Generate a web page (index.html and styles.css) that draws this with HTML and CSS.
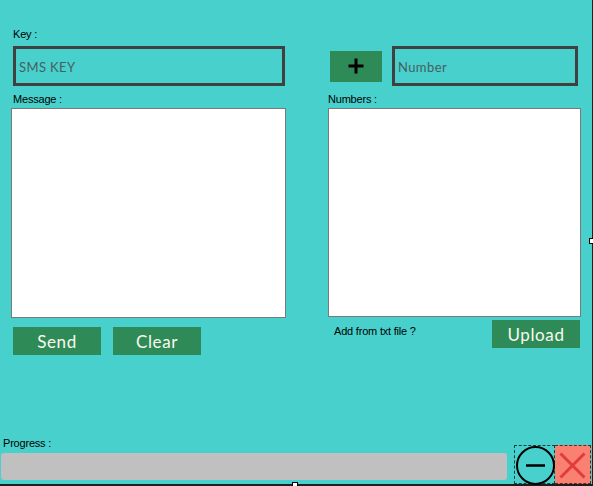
FILE: index.html
```html
<!DOCTYPE html>
<html>
<head>
<meta charset="utf-8">
<link rel="stylesheet" href="styles.css">
</head>
<body>
<div class="frame">
  <div class="top">
    <div class="col">
      <div class="label">Key :</div>
      <div class="field field-key"><span class="hint">SMS KEY</span></div>
      <div class="label label-gap">Message :</div>
      <div class="memo memo-left"></div>
      <div class="btnrow">
        <div class="btn">Send</div>
        <div class="btn">Clear</div>
      </div>
    </div>
    <div class="col">
      <div class="addrow">
        <div class="plus">
          <svg width="18" height="18" viewBox="0 0 18 18"><path d="M9 1.5V16.5M1.5 9H16.5" stroke="#000" stroke-width="3"/></svg>
        </div>
        <div class="field field-num"><span class="hint">Number</span></div>
      </div>
      <div class="label label-gap label-flush">Numbers :</div>
      <div class="memo memo-right"></div>
      <div class="uprow">
        <div class="label upl-label">Add from txt file ?</div>
        <div class="btn">Upload</div>
      </div>
    </div>
  </div>
  <div class="bottom">
    <div class="label prog-label">Progress :</div>
    <div class="bar"></div>
    <div class="minbox">
      <svg width="41" height="39" viewBox="0 0 41 39"><circle cx="20.5" cy="19.5" r="18.5" fill="none" stroke="#000" stroke-width="2"/><path d="M11 19.5H30" stroke="#000" stroke-width="2.5"/></svg>
    </div>
    <div class="closebox">
      <svg width="35" height="38" viewBox="0 0 35 38"><path d="M5.5 7.5L29.5 31.5M29.5 7.5L5.5 31.5" stroke="#E23B3B" stroke-width="3"/></svg>
    </div>
  </div>
  <div class="handle handle-bottom"></div>
  <div class="handle handle-right"></div>
</div>
</body>
</html>
```
FILE: styles.css
```css
html, body {
  margin: 0;
  padding: 0;
  background: #48D1CC;
}
body {
  width: 593px;
  height: 486px;
  overflow: hidden;
}
.frame {
  position: relative;
  width: 592px;
  height: 484px;
  border-right: 1px solid #1f1f1f;
  border-bottom: 2px solid #1f1f1f;
  display: flex;
  flex-direction: column;
  background: #48D1CC;
}
.top {
  display: grid;
  grid-template-columns: 275px 253px;
  column-gap: 42px;
  padding: 28px 0 0 11px;
}
.col {
  display: flex;
  flex-direction: column;
  align-items: flex-start;
}
.label {
  font-family: "Liberation Sans", Arial, sans-serif;
  font-size: 11px;
  line-height: 13px;
  color: #000;
  margin-left: 2px;
  white-space: nowrap;
  letter-spacing: -0.2px;
}
.label-gap {
  margin-top: 7px;
}
.label-flush {
  margin-left: 0;
}
.field {
  box-sizing: border-box;
  height: 40px;
  border: 3px solid #404040;
  display: flex;
  align-items: center;
  padding-left: 3px;
}
.field-key {
  margin: 5px 0 0 2px;
  width: 272px;
}
.field-num {
  width: 186px;
}
.hint {
  font-family: "Lato", "DejaVu Sans", sans-serif;
  font-size: 13px;
  font-weight: 400;
  color: #466060;
  letter-spacing: 0.4px;
  padding-top: 2px;
}
.memo {
  box-sizing: border-box;
  margin-top: 2px;
  background: #fff;
  border: 1px solid #7a7a7a;
}
.memo-left {
  width: 275px;
  height: 210px;
}
.memo-right {
  width: 253px;
  height: 209px;
}
.btnrow {
  display: flex;
  gap: 12px;
  margin: 9px 0 0 2px;
}
.btn {
  width: 88px;
  height: 28px;
  background: #2E8B57;
  color: #fafaf0;
  font-family: "Lato", "DejaVu Sans", sans-serif;
  font-size: 17px;
  font-weight: 400;
  letter-spacing: 0.6px;
  display: flex;
  align-items: center;
  justify-content: center;
}
.addrow {
  display: flex;
  align-items: center;
  gap: 10px;
  margin: 18px 0 0 2px;
  height: 40px;
}
.plus {
  width: 52px;
  height: 31px;
  background: #2E8B57;
  display: flex;
  align-items: center;
  justify-content: center;
}
.plus svg {
  display: block;
}
.uprow {
  display: flex;
  justify-content: space-between;
  align-items: flex-start;
  width: 252px;
  margin-top: 3px;
}
.upl-label {
  margin: 5px 0 0 6px;
}
.bottom {
  margin-top: auto;
  display: grid;
  grid-template-columns: 506px 7px 41px 36px;
  grid-template-rows: 13px 3px 27px 4px;
  padding-left: 1px;
}
.prog-label {
  grid-column: 1;
  grid-row: 1;
}
.bar {
  grid-column: 1;
  grid-row: 3;
  background: #C0C0C0;
  border-radius: 3px;
}
.minbox {
  grid-column: 3;
  grid-row: 1 / 5;
  align-self: end;
  box-sizing: border-box;
  height: 39px;
  border: 1px dashed #1d3b39;
  position: relative;
}
.minbox svg {
  position: absolute;
  left: 0;
  top: 0;
}
.closebox {
  grid-column: 4;
  grid-row: 1 / 5;
  align-self: end;
  box-sizing: border-box;
  height: 39px;
  background: #FA8072;
  border: 1px dashed #5a2a25;
  border-left: none;
}
.closebox svg {
  display: block;
}
.handle {
  position: absolute;
  box-sizing: border-box;
  background: #fff;
  border: 1px solid #000;
}
.handle-bottom {
  left: 292px;
  top: 482px;
  width: 6px;
  height: 6px;
}
.handle-right {
  left: 589px;
  top: 238px;
  width: 6px;
  height: 6px;
}
```
